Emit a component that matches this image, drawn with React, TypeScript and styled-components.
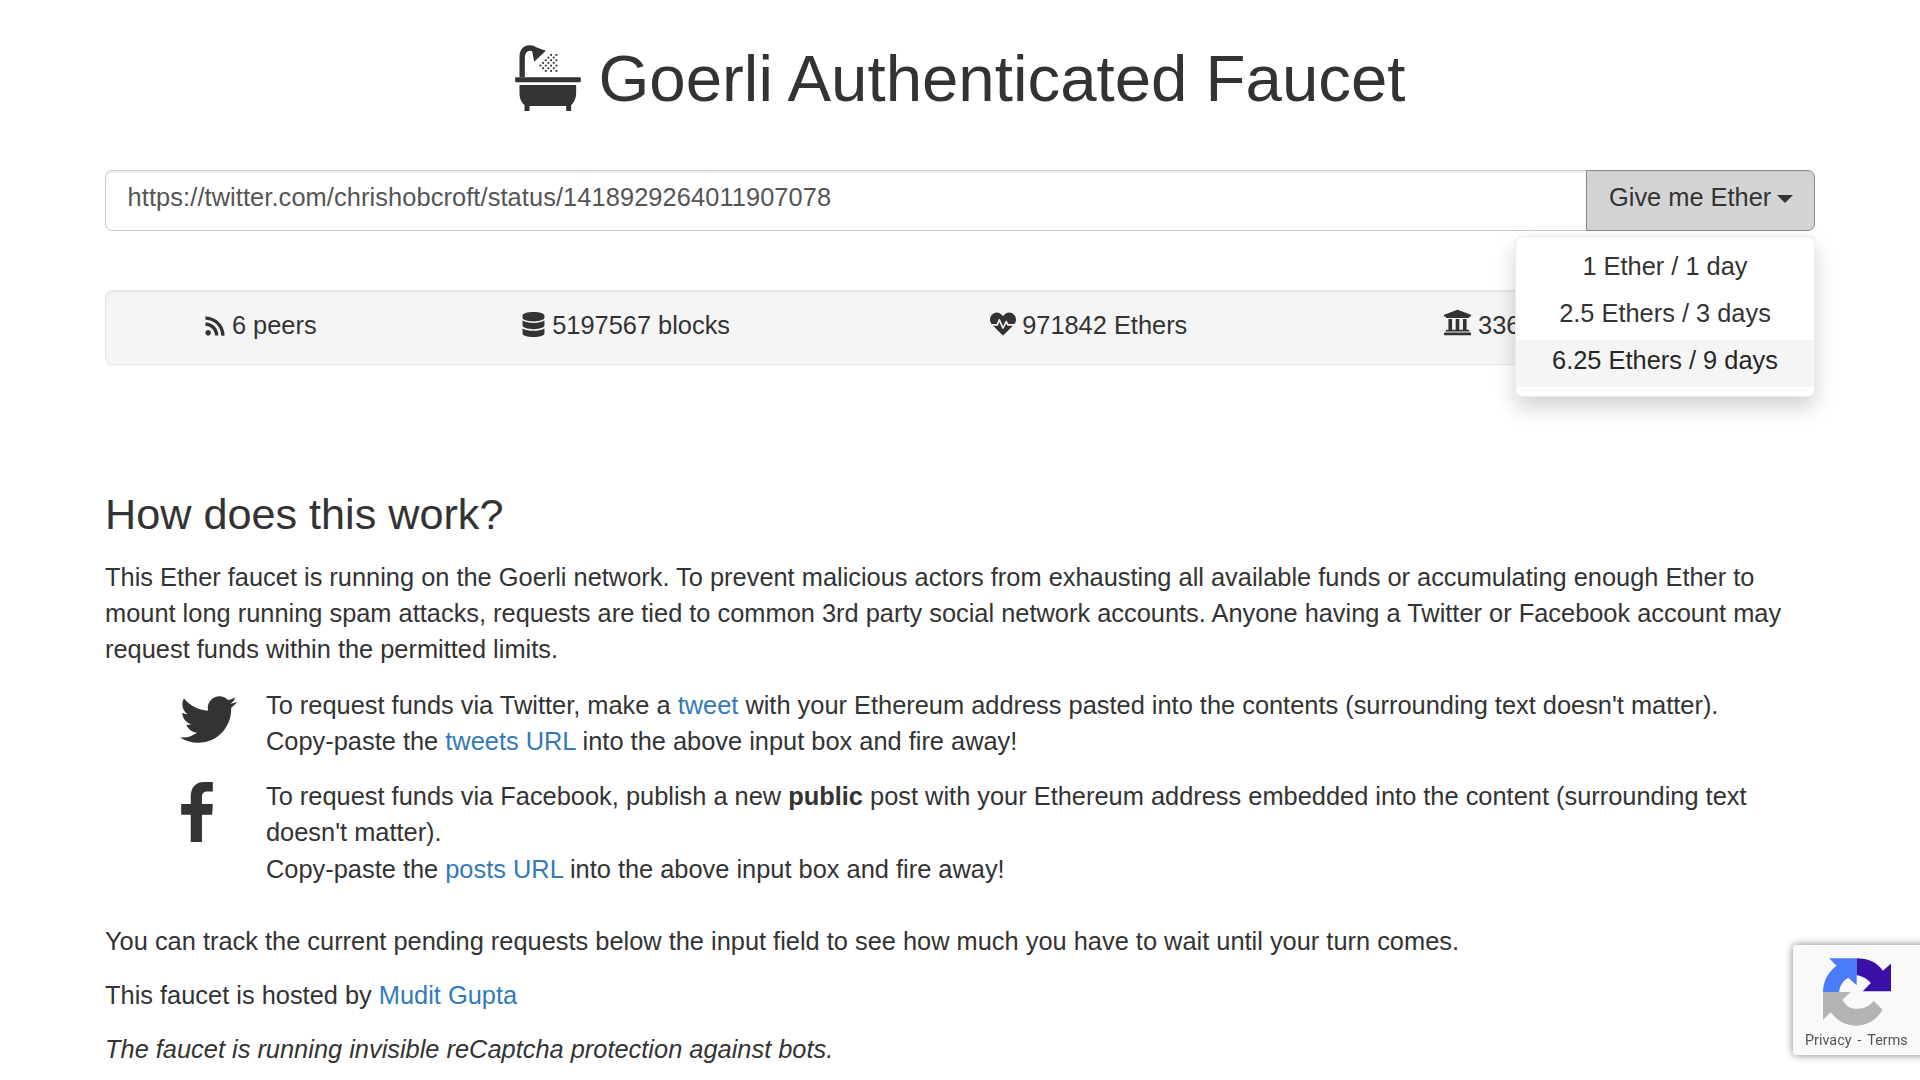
import React from "react";
import styled, { createGlobalStyle } from "styled-components";
import { FaRss, FaDatabase, FaHeartbeat, FaUniversity, FaTwitter } from "react-icons/fa";

const Global = createGlobalStyle`
  html, body { margin: 0; padding: 0; background: #fff; }
  body { font-family: "Liberation Sans", Arial, sans-serif; font-size: 25.4px; line-height: 36.3px; color: #333; }
  * { box-sizing: border-box; }
`;

const Page = styled.div`
  width: 1710px;
  margin: 0 auto;
`;

const Title = styled.h1`
  margin: 0;
  padding-top: 43px;
  height: 170px;
  font-size: 65.4px;
  line-height: 71px;
  font-weight: 500;
  text-align: center;
  color: #333;
  display: flex;
  justify-content: center;
  align-items: flex-start;
  gap: 18px;
`;

const BathIcon = styled.svg`
  width: 66px;
  height: 66px;
  margin-top: 2px;
  fill: #333;
`;

const InputGroup = styled.div`
  position: relative;
  display: flex;
  height: 61px;
`;

const AddressInput = styled.input`
  flex: 1;
  min-width: 0;
  height: 61px;
  padding: 0 21.6px 6px;
  font: inherit;
  letter-spacing: 0.09px;
  color: #555;
  border: 1.8px solid #ccc;
  border-right: 0;
  border-radius: 7px 0 0 7px;
  box-shadow: inset 0 1.8px 1.8px rgba(0, 0, 0, 0.075);
  outline: none;
`;

const GiveButton = styled.div`
  width: 229px;
  height: 61px;
  padding: 0 0 6px 22px;
  display: flex;
  align-items: center;
  gap: 6px;
  background: #d4d4d4;
  border: 1.8px solid #8c8c8c;
  border-radius: 0 7px 7px 0;
  color: #333;
  white-space: nowrap;
  box-shadow: inset 0 5px 9px rgba(0, 0, 0, 0.02);
`;

const Caret = styled.span`
  width: 0;
  height: 0;
  margin-top: 2px;
  border-top: 8px solid #333;
  border-left: 8px solid transparent;
  border-right: 8px solid transparent;
`;

const Menu = styled.div`
  position: absolute;
  top: 66px;
  right: 0;
  z-index: 10;
  width: 300px;
  padding: 9px 0;
  background: #fff;
  border: 1px solid rgba(0, 0, 0, 0.08);
  border-radius: 7px;
  box-shadow: 0 10.8px 21.6px rgba(0, 0, 0, 0.175);
`;

const MenuItem = styled.div<{ $active?: boolean }>`
  height: 47px;
  line-height: 41px;
  text-align: center;
  color: ${(p) => (p.$active ? "#262626" : "#333")};
  background: ${(p) => (p.$active ? "#f5f5f5" : "transparent")};
`;

const Stats = styled.div`
  margin-top: 59px;
  padding: 16px 18px 0;
  height: 75px;
  background: #f5f5f5;
  border: 1.8px solid #e3e3e3;
  border-radius: 7px;
  box-shadow: inset 0 1.8px 1.8px rgba(0, 0, 0, 0.05);
`;

const StatsTable = styled.table`
  width: 100%;
  table-layout: fixed;
  border-collapse: collapse;
`;

const StatCell = styled.td<{ $width: string }>`
  width: ${(p) => p.$width};
  padding: 0;
  text-align: center;
  white-space: nowrap;
  svg {
    vertical-align: -3px;
    margin-right: 6px;
    fill: #333;
  }
`;

const Heading = styled.h3`
  margin: 126px 0 20px;
  font-size: 43.2px;
  line-height: 47.5px;
  font-weight: 500;
  color: #333;
`;

const Para = styled.p<{ $italic?: boolean; $gap?: boolean; $first?: boolean }>`
  margin: ${(p) => (p.$gap ? "36px" : "0")} 0 ${(p) => (p.$first ? "19.5px" : "18px")};
  font-style: ${(p) => (p.$italic ? "italic" : "normal")};
`;

const Social = styled.div`
  display: grid;
  grid-template-columns: 161px 1fr;
  margin-bottom: 18.5px;
`;

const SocialIcon = styled.div`
  padding: 4px 0 0 76px;
  svg {
    display: block;
    fill: #333;
  }
`;

const TwitterIconBox = styled(SocialIcon)`
  padding-left: 75px;
`;

const A = styled.a`
  color: #337ab7;
  text-decoration: none;
`;

const Badge = styled.div`
  position: fixed;
  left: 1793px;
  top: 945px;
  width: 140px;
  height: 110px;
  background: #f9f9f9;
  border-radius: 3px 0 0 3px;
  box-shadow: 0 0 9px gray;
  overflow: hidden;
`;

const BadgeLogo = styled.svg`
  display: block;
  position: absolute;
  left: 30px;
  top: 13px;
  width: 68px;
  height: 68px;
`;

const BadgeLinks = styled.div`
  position: absolute;
  left: 12px;
  top: 86px;
  font-family: Roboto, sans-serif;
  font-size: 14.4px;
  line-height: 20px;
  color: #555;
  white-space: nowrap;
  word-spacing: 2.5px;
`;

const dots: [number, number][] = [];
for (let i = 0; i < 6; i++) {
  for (let j = 0; j < 6; j++) {
    const x = 118 + i * 8 + j * 8;
    const y = 112 - i * 8 + j * 8 - 8;
    if (x >= 112 && x <= 166 && y >= 70 && y <= 122 && x + y >= 190 && y - x >= -96 && !(i > 3 && j > 3)) dots.push([x, y]);
  }
}

export default function App() {
  return (
    <>
      <Global />
      <Page>
        <Title>
          <BathIcon viewBox="45 45 197 198">
            <path d="M58 142V80C58 60 70 46 88 46C98 46 104 48 108 52L137 62L102 95L96 64C90 60 80 62 76 72C74 78 74 84 74 90V142Z" />
            {dots.map(([x, y]) => (
              <rect key={`${x}-${y}`} x={x} y={y} width="5.5" height="5.5" />
            ))}
            <rect x="45" y="142" width="197" height="15" rx="3" />
            <path d="M58 165H228V190C228 208 218 222 213 225V243H198V228H88V243H73V225C66 220 58 208 58 190Z" />
          </BathIcon>
          Goerli Authenticated Faucet
        </Title>
        <InputGroup>
          <AddressInput readOnly value="https://twitter.com/chrishobcroft/status/1418929264011907078" />
          <GiveButton>
            Give me Ether <Caret />
          </GiveButton>
          <Menu>
            <MenuItem>1 Ether / 1 day</MenuItem>
            <MenuItem>2.5 Ethers / 3 days</MenuItem>
            <MenuItem $active>6.25 Ethers / 9 days</MenuItem>
          </Menu>
        </InputGroup>
        <Stats>
          <StatsTable>
            <tbody>
              <tr>
                <StatCell $width="16.3%"><FaRss size={22} />6 peers</StatCell>
                <StatCell $width="27.4%"><FaDatabase size={25} />5197567 blocks</StatCell>
                <StatCell $width="28%"><FaHeartbeat size={26} />971842 Ethers</StatCell>
                <StatCell $width="28.3%"><FaUniversity size={29} />33620458 funded</StatCell>
              </tr>
            </tbody>
          </StatsTable>
        </Stats>
        <Heading>How does this work?</Heading>
        <Para $first>
          This Ether faucet is running on the Goerli network. To prevent malicious actors from exhausting all available funds or accumulating enough Ether to mount long running spam attacks, requests are tied to common 3rd party social network accounts. Anyone having a Twitter or Facebook account may request funds within the permitted limits.
        </Para>
        <Social>
          <TwitterIconBox><FaTwitter size={57} /></TwitterIconBox>
          <div>
            To request funds via Twitter, make a <A>tweet</A> with your Ethereum address pasted into the contents (surrounding text doesn't matter).
            <br />
            Copy-paste the <A>tweets URL</A> into the above input box and fire away!
          </div>
        </Social>
        <Social>
          <SocialIcon>
            <svg width="32" height="60" viewBox="64 303 96 182">
              <path d="M160 303H135C105 303 93 322 93 348V370H64V402H93V485H127V402H158L160 370H127V350C127 338 132 332 145 332H160Z" />
            </svg>
          </SocialIcon>
          <div>
            To request funds via Facebook, publish a new <b>public</b> post with your Ethereum address embedded into the content (surrounding text doesn't matter).
            <br />
            Copy-paste the <A>posts URL</A> into the above input box and fire away!
          </div>
        </Social>
        <Para $gap>You can track the current pending requests below the input field to see how much you have to wait until your turn comes.</Para>
        <Para>This faucet is hosted by <A>Mudit Gupta</A></Para>
        <Para $italic>The faucet is running invisible reCaptcha protection against bots.</Para>
      </Page>
      <Badge>
        <BadgeLogo viewBox="130 85 202 200">
          <path fill="#b4b4b4" d="M130 185H212L188 208C198 228 215 236 232 235C255 235 270 225 281 212L307 238C290 268 260 285 230 285C198 285 172 270 153 245L130 268Z" />
          <path fill="#4a7cf7" d="M130 185H178C180 165 190 152 205 143L230 165V85H148L170 107C145 125 130 155 130 185Z" />
          <path fill="#3a10a8" d="M230 85C265 85 290 97 308 122L332 100V183H248L272 158C262 146 247 137 230 135Z" />
        </BadgeLogo>
        <BadgeLinks>Privacy - Terms</BadgeLinks>
      </Badge>
    </>
  );
}
